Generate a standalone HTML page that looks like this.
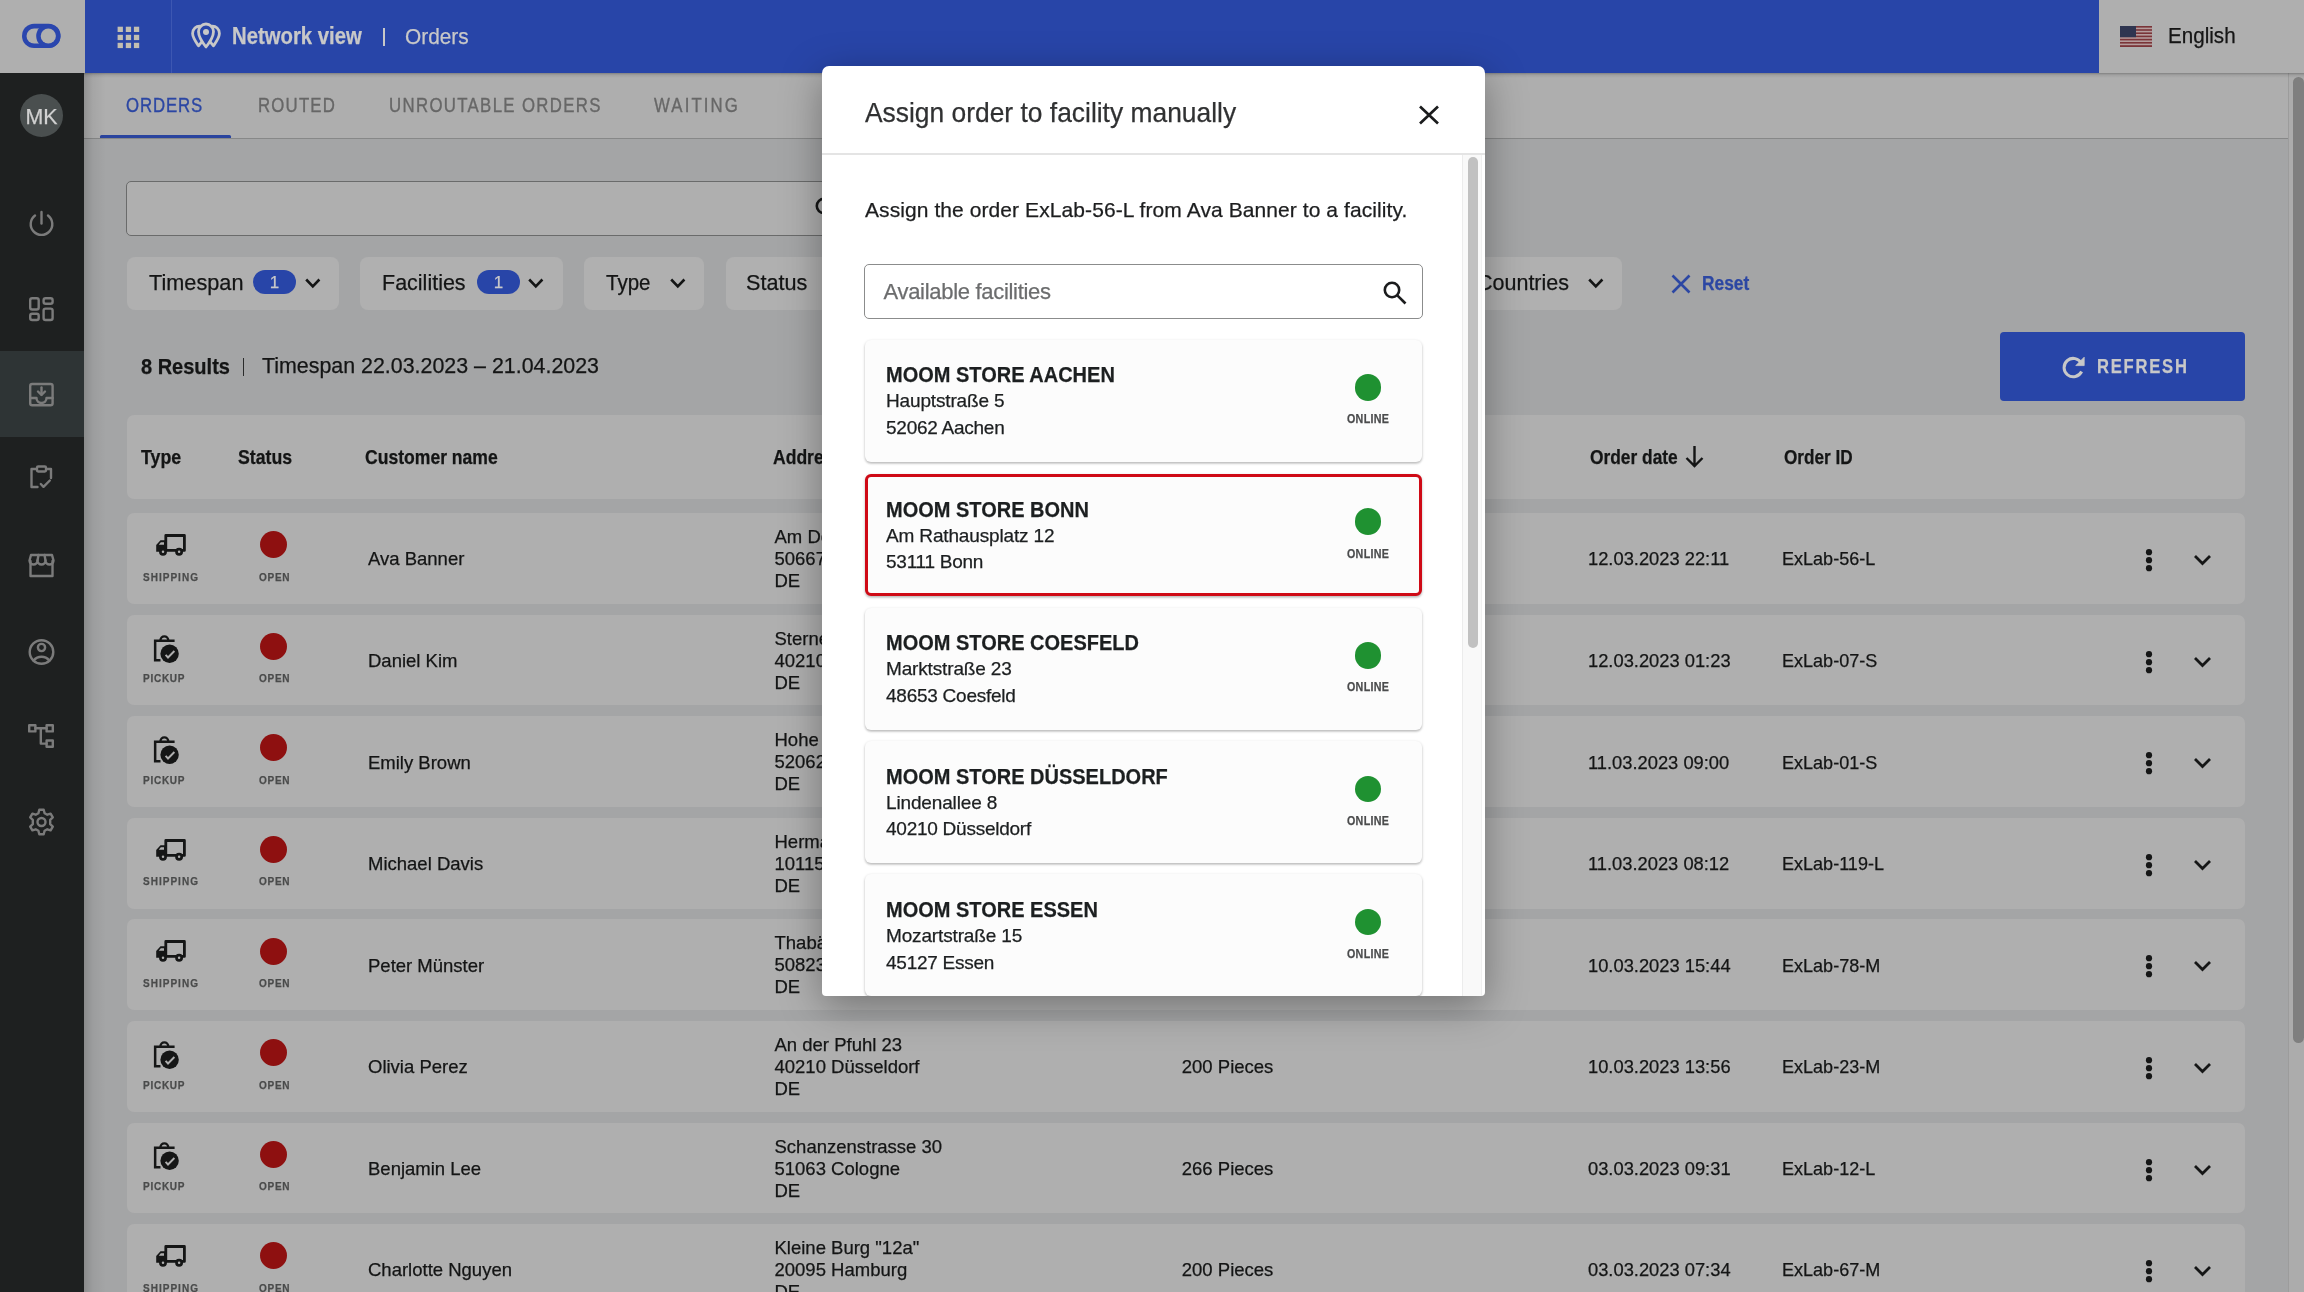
<!DOCTYPE html>
<html><head><meta charset="utf-8">
<style>
*{box-sizing:border-box;margin:0;padding:0}
html,body{width:2304px;height:1292px;overflow:hidden}
body{position:relative;background:#a4a5a6;font-family:"Liberation Sans",sans-serif;color:#121313}
#root{position:absolute;left:0;top:0;width:2304px;height:1292px;overflow:hidden;background:#a4a5a6;will-change:transform}
.a{position:absolute}
.t{position:absolute;white-space:nowrap;line-height:1;-webkit-text-stroke:0.25px currentColor}
svg{position:absolute;overflow:visible}
/* header */
#logo{left:0;top:0;width:85px;height:73px;background:#afafaf}
#hdr{left:85px;top:0;width:2014px;height:73px;background:#2845a8}
#lang{left:2099px;top:0;width:2205px;height:73px;background:#afafaf}
#side{left:0;top:73px;width:84px;height:1219px;background:#1e2020}
#tabs{left:84px;top:73px;width:2204px;height:65.5px;background:#aeaeae;border-bottom:1.5px solid #878888}
.card{position:absolute;background:#afafaf;border-radius:7px}
.chip{position:absolute;background:#b0b0b0;border-radius:8px;top:257px;height:53px}
.badge{position:absolute;background:#2845a8;border-radius:12px;width:43px;height:24px;top:270px;color:#c9c9c9;font-size:17px;text-align:center;line-height:24px}
.lbl{position:absolute;white-space:nowrap;line-height:1;font-size:11.5px;font-weight:700;letter-spacing:0px;color:#4a4b4b}
.dot{position:absolute;width:27px;height:27px;border-radius:50%;background:#8e1010}
.row .t{font-size:19px}
/* modal */
#modal{left:822px;top:65.5px;width:663px;height:930px;background:#fff;border-radius:7px 7px 4px 4px;box-shadow:0 10px 40px rgba(0,0,0,.35);overflow:hidden}
.fcard{position:absolute;left:43px;width:557px;height:122px;background:#fcfcfc;border-radius:6px;box-shadow:0 1px 3px rgba(0,0,0,.22),0 2px 2px rgba(0,0,0,.1)}
.fcard .nm{position:absolute;left:21px;top:27px;font-size:21px;font-weight:700;color:#1d2021;white-space:nowrap;line-height:1}
.fcard .l1{position:absolute;left:21px;top:53px;font-size:19px;color:#1d2021;white-space:nowrap;line-height:1}
.fcard .l2{position:absolute;left:21px;top:80px;font-size:19px;color:#1d2021;white-space:nowrap;line-height:1}
.fcard .gd{position:absolute;left:489px;top:34px;width:27px;height:27px;border-radius:50%;background:#1f9030}
.fcard .on{position:absolute;left:482px;top:74px;font-size:11.5px;font-weight:700;letter-spacing:1.4px;color:#4a4b4b;white-space:nowrap;line-height:1}
</style></head><body><div id="root">

<div id="logo" class="a"></div>
<div id="hdr" class="a"></div>
<div id="lang" class="a"></div>
<div id="side" class="a"></div>
<div id="tabs" class="a"></div>

<!-- logo -->
<svg style="left:0;top:0" width="85" height="73">
<path fill="#2a46ae" d="M34.1 23.8 H48.5 A12.1 12.1 0 0 1 48.5 48 H34.1 A12.1 12.1 0 0 1 34.1 23.8 Z"/>
<path fill="#afafaf" d="M34.1 28.4 H48.5 A7.6 7.6 0 0 1 48.5 43.6 H34.1 A7.6 7.6 0 0 1 34.1 28.4 Z"/>
<circle fill="#2a46ae" cx="48.3" cy="36" r="12.1"/>
<circle fill="#afafaf" cx="48.3" cy="36" r="7.6"/>
</svg>
<!-- grid icon -->
<svg style="left:0;top:0" width="180" height="73" fill="#c2beb1">
<rect x="117.6" y="26.7" width="5.3" height="5.3"/><rect x="125.8" y="26.7" width="5.3" height="5.3"/><rect x="133.9" y="26.7" width="5.3" height="5.3"/>
<rect x="117.6" y="34.8" width="5.3" height="5.3"/><rect x="125.8" y="34.8" width="5.3" height="5.3"/><rect x="133.9" y="34.8" width="5.3" height="5.3"/>
<rect x="117.6" y="42.8" width="5.3" height="5.3"/><rect x="125.8" y="42.8" width="5.3" height="5.3"/><rect x="133.9" y="42.8" width="5.3" height="5.3"/>
</svg>
<div class="a" style="left:171px;top:0;width:1px;height:73px;background:#3d57b2"></div>
<!-- pin icon -->
<svg style="left:0;top:0" width="240" height="73" fill="none" stroke="#c8c8c8" stroke-width="2.8" stroke-linejoin="round" stroke-linecap="round">
<path d="M206 47 C202 42 198.5 37 198.5 31.5 A7.5 7.5 0 0 1 213.5 31.5 C213.5 37 210 42 206 47 Z"/>
<path d="M200.5 26.3 C196 25.8 192.6 29 192.6 33.5 C192.6 37.5 195.5 41.5 198.5 45.8 L201.8 41.8"/>
<path d="M211.5 26.3 C216 25.8 219.4 29 219.4 33.5 C219.4 37.5 216.5 41.5 213.5 45.8 L210.2 41.8"/>
<circle cx="206" cy="31.9" r="3" fill="#c8c8c8" stroke="none"/>
</svg>
<div class="t" style="left:232px;top:25.13px;font-size:23px;font-weight:700;color:#c8c8c8;transform:scaleX(0.883);transform-origin:0 0">Network view</div>
<div class="a" style="left:383px;top:28px;width:1.6px;height:18px;background:#c8c8c8"></div>
<div class="t" style="left:404.5px;top:25.55px;font-size:22.5px;color:#c8c8c8;transform:scaleX(0.926);transform-origin:0 0">Orders</div>
<!-- language -->
<svg style="left:2120px;top:26px" width="32" height="21" viewBox="0 0 32 21">
<rect width="32" height="21" fill="#b49c9c"/>
<g fill="#7a3438"><rect y="0" width="32" height="1.6"/><rect y="3.2" width="32" height="1.6"/><rect y="6.4" width="32" height="1.6"/><rect y="9.6" width="32" height="1.6"/><rect y="12.8" width="32" height="1.6"/><rect y="16" width="32" height="1.6"/><rect y="19.2" width="32" height="1.8"/></g>
<rect width="16" height="11.2" fill="#2f3550"/>
</svg>
<div class="t" style="left:2168px;top:26.1px;font-size:21.5px;color:#151515;transform:scaleX(0.959);transform-origin:0 0">English</div>

<!-- CONTENT -->
<div class="t" style="left:126.3px;top:96.09px;font-size:19.5px;color:#2c47a3;letter-spacing:1.04px;transform:scaleX(0.860);transform-origin:0 0;-webkit-text-stroke:0.35px #2c47a3">ORDERS</div>
<div class="t" style="left:257.8px;top:96.09px;font-size:19.5px;color:#676767;letter-spacing:1.41px;transform:scaleX(0.860);transform-origin:0 0;-webkit-text-stroke:0.35px #676767">ROUTED</div>
<div class="t" style="left:388.9px;top:96.09px;font-size:19.5px;color:#676767;letter-spacing:1.57px;transform:scaleX(0.860);transform-origin:0 0;-webkit-text-stroke:0.35px #676767">UNROUTABLE ORDERS</div>
<div class="t" style="left:654.1px;top:96.09px;font-size:19.5px;color:#676767;letter-spacing:2.48px;transform:scaleX(0.860);transform-origin:0 0;-webkit-text-stroke:0.35px #676767">WAITING</div>
<div class="a" style="left:99.6px;top:134.7px;width:131px;height:3px;background:#2a449e;border-radius:1.5px 1.5px 0 0"></div>
<div class="a" style="left:125.5px;top:181px;width:740px;height:55px;border:1.7px solid #6a6b6b;border-radius:5px;background:#afafaf"></div>
<svg style="left:814.6px;top:197.4px" width="24" height="24" fill="none" stroke="#151616" stroke-width="2.6"><circle cx="9" cy="9" r="7.2"/><path d="M14.3 14.3 L22.5 22.5"/></svg>
<div class="chip" style="left:126.8px;width:212.0px"></div>
<div class="t" style="left:149.3px;top:272.24px;font-size:22.4px;color:#141515;transform:scaleX(0.969);transform-origin:0 0;">Timespan</div>
<div class="badge" style="left:253px"></div>
<div class="t" style="left:253px;top:273.91px;width:43px;text-align:center;font-size:17px;color:#c9c9c9">1</div>
<svg style="left:305px;top:278px" width="16" height="11" fill="none" stroke="#141515" stroke-width="2.6"><path d="M1.2 1.5 L7.8 8.3 L14.4 1.5"/></svg>
<div class="chip" style="left:360.4px;width:202.4px"></div>
<div class="t" style="left:381.6px;top:272.24px;font-size:22.4px;color:#141515;transform:scaleX(0.960);transform-origin:0 0;">Facilities</div>
<div class="badge" style="left:476.9px"></div>
<div class="t" style="left:476.9px;top:273.91px;width:43px;text-align:center;font-size:17px;color:#c9c9c9">1</div>
<svg style="left:528.3px;top:278px" width="16" height="11" fill="none" stroke="#141515" stroke-width="2.6"><path d="M1.2 1.5 L7.8 8.3 L14.4 1.5"/></svg>
<div class="chip" style="left:584.4px;width:119.6px"></div>
<div class="t" style="left:606.0px;top:272.24px;font-size:22.4px;color:#141515;transform:scaleX(0.915);transform-origin:0 0;">Type</div>
<svg style="left:670px;top:278px" width="16" height="11" fill="none" stroke="#141515" stroke-width="2.6"><path d="M1.2 1.5 L7.8 8.3 L14.4 1.5"/></svg>
<div class="chip" style="left:725.5px;width:104.5px"></div>
<div class="t" style="left:746.0px;top:272.24px;font-size:22.4px;color:#141515;transform:scaleX(0.966);transform-origin:0 0;">Status</div>
<div class="chip" style="left:1400px;width:222px"></div>
<div class="t" style="left:1476.5px;top:272.24px;font-size:22.4px;color:#141515;transform:scaleX(0.960);transform-origin:0 0;">Countries</div>
<svg style="left:1588px;top:278px" width="16" height="11" fill="none" stroke="#141515" stroke-width="2.6"><path d="M1.2 1.5 L7.8 8.3 L14.4 1.5"/></svg>
<svg style="left:1671px;top:274px" width="20" height="20" fill="none" stroke="#2c47a3" stroke-width="2.6"><path d="M1.5 1.5 L18.5 18.5 M18.5 1.5 L1.5 18.5"/></svg>
<div class="t" style="left:1701.5px;top:274.49px;font-size:19.5px;font-weight:700;color:#2c47a3;transform:scaleX(0.890);transform-origin:0 0;">Reset</div>
<div class="t" style="left:141.0px;top:356.45px;font-size:21.2px;font-weight:700;color:#141515;transform:scaleX(0.944);transform-origin:0 0;">8 Results</div>
<div class="a" style="left:242.8px;top:357.5px;width:1.6px;height:18px;background:#2a2b2b"></div>
<div class="t" style="left:262.0px;top:356.28px;font-size:21.4px;color:#141515;">Timespan 22.03.2023 – 21.04.2023</div>
<div class="a" style="left:2000px;top:331.5px;width:245px;height:69px;background:#2845a8;border-radius:4px"></div>
<svg style="left:2060px;top:353px" width="28" height="28" fill="none" stroke="#c8c8c8" stroke-width="3"><path d="M21.5 10.5 A9.2 9.2 0 1 0 21.6 18.5"/><path d="M24.2 4.2 V12.6 H15.8 Z" fill="#c8c8c8" stroke-width="0.8"/></svg>
<div class="t" style="left:2096.5px;top:356.69px;font-size:19.5px;font-weight:700;color:#c8c8c8;letter-spacing:2.09px;transform:scaleX(0.850);transform-origin:0 0;">REFRESH</div>
<div class="card" style="left:127px;top:414.7px;width:2118px;height:84.8px"></div>
<div class="t" style="left:140.6px;top:448.46px;font-size:19.3px;font-weight:700;color:#141515;transform:scaleX(0.922);transform-origin:0 0;">Type</div>
<div class="t" style="left:238.3px;top:448.46px;font-size:19.3px;font-weight:700;color:#141515;transform:scaleX(0.918);transform-origin:0 0;">Status</div>
<div class="t" style="left:365.2px;top:448.46px;font-size:19.3px;font-weight:700;color:#141515;transform:scaleX(0.911);transform-origin:0 0;">Customer name</div>
<div class="t" style="left:773.0px;top:448.46px;font-size:19.3px;font-weight:700;color:#141515;transform:scaleX(0.910);transform-origin:0 0;">Address</div>
<div class="t" style="left:1181.0px;top:448.46px;font-size:19.3px;font-weight:700;color:#141515;transform:scaleX(0.910);transform-origin:0 0;">Quantity</div>
<div class="t" style="left:1589.7px;top:448.46px;font-size:19.3px;font-weight:700;color:#141515;transform:scaleX(0.900);transform-origin:0 0;">Order date</div>
<div class="t" style="left:1783.7px;top:448.46px;font-size:19.3px;font-weight:700;color:#141515;transform:scaleX(0.891);transform-origin:0 0;">Order ID</div>
<svg style="left:1684px;top:445px" width="22" height="24" fill="none" stroke="#141515" stroke-width="2.4"><path d="M10.5 1 V21 M2.5 13 L10.5 21 L18.5 13"/></svg>
<div class="card" style="left:127px;top:513.2px;width:2118px;height:90.7px"></div>
<svg style="left:156px;top:533.0px" width="32" height="28"><path d="M9.8 2.5 H28.4 V17.4 H9.8 Z" fill="none" stroke="#151616" stroke-width="2.8" stroke-linejoin="round"/><path d="M0.2 12 L4.5 7.2 H11 V18.8 H0.2 Z" fill="#151616"/><path d="M2.8 11.7 L4.8 9.2 H8 V11.7 Z" fill="#afafaf"/><circle cx="7" cy="18.8" r="2.6" fill="#afafaf" stroke="#151616" stroke-width="2.7"/><circle cx="23.1" cy="18.8" r="2.6" fill="#afafaf" stroke="#151616" stroke-width="2.7"/></svg>
<div class="t" style="left:143.0px;top:571.81px;font-size:11.8px;font-weight:700;color:#4a4b4b;letter-spacing:1.18px;transform:scaleX(0.850);transform-origin:0 0;">SHIPPING</div>
<div class="dot" style="left:260.3px;top:531.3px"></div>
<div class="t" style="left:258.5px;top:571.81px;font-size:11.8px;font-weight:700;color:#4a4b4b;letter-spacing:0.84px;transform:scaleX(0.850);transform-origin:0 0;">OPEN</div>
<div class="t" style="left:368.0px;top:550.44px;font-size:18.5px;color:#141515;">Ava Banner</div>
<div class="t" style="left:774.5px;top:528.24px;font-size:18.5px;color:#141515;">Am Dorfplatz 4</div>
<div class="t" style="left:774.5px;top:550.24px;font-size:18.5px;color:#141515;">50667 Cologne</div>
<div class="t" style="left:774.5px;top:572.24px;font-size:18.5px;color:#141515;">DE</div>
<div class="t" style="left:1588.0px;top:550.44px;font-size:18.5px;color:#141515;transform:scaleX(0.990);transform-origin:0 0;">12.03.2023 22:11</div>
<div class="t" style="left:1782.0px;top:550.44px;font-size:18.5px;color:#141515;transform:scaleX(0.975);transform-origin:0 0;">ExLab-56-L</div>
<svg style="left:2140px;top:549.2px" width="18" height="26" fill="#151616"><circle cx="9" cy="3.2" r="3.1"/><circle cx="9" cy="11.2" r="3.1"/><circle cx="9" cy="19.2" r="3.1"/></svg>
<svg style="left:2193px;top:554.2px" width="20" height="14" fill="none" stroke="#151616" stroke-width="2.8"><path d="M2 2 L9.5 9.5 L17 2"/></svg>
<div class="card" style="left:127px;top:614.8px;width:2118px;height:90.7px"></div>
<svg style="left:150px;top:629.5px" width="32" height="34"><path d="M10.45 12 V10.3 A3.9 3.9 0 0 1 18.25 10.3 V12" fill="none" stroke="#151616" stroke-width="2.4"/><path d="M10.5 30.3 H5.15 V10.7 H24.6" fill="none" stroke="#151616" stroke-width="2.5"/><circle cx="19.6" cy="23.8" r="10.4" fill="#afafaf"/><circle cx="19.6" cy="23.8" r="9.2" fill="#151616"/><path d="M15.6 24.9 L18 27.5 L24.4 21" fill="none" stroke="#afafaf" stroke-width="1.9"/></svg>
<div class="t" style="left:143.2px;top:673.36px;font-size:11.8px;font-weight:700;color:#4a4b4b;letter-spacing:0.85px;transform:scaleX(0.850);transform-origin:0 0;">PICKUP</div>
<div class="dot" style="left:260.3px;top:632.9px"></div>
<div class="t" style="left:258.5px;top:673.36px;font-size:11.8px;font-weight:700;color:#4a4b4b;letter-spacing:0.84px;transform:scaleX(0.850);transform-origin:0 0;">OPEN</div>
<div class="t" style="left:368.0px;top:651.99px;font-size:18.5px;color:#141515;">Daniel Kim</div>
<div class="t" style="left:774.5px;top:629.79px;font-size:18.5px;color:#141515;">Sternenweg 12</div>
<div class="t" style="left:774.5px;top:651.79px;font-size:18.5px;color:#141515;">40210 Düsseldorf</div>
<div class="t" style="left:774.5px;top:673.79px;font-size:18.5px;color:#141515;">DE</div>
<div class="t" style="left:1588.0px;top:651.99px;font-size:18.5px;color:#141515;transform:scaleX(0.990);transform-origin:0 0;">12.03.2023 01:23</div>
<div class="t" style="left:1782.0px;top:651.99px;font-size:18.5px;color:#141515;transform:scaleX(0.975);transform-origin:0 0;">ExLab-07-S</div>
<svg style="left:2140px;top:650.8px" width="18" height="26" fill="#151616"><circle cx="9" cy="3.2" r="3.1"/><circle cx="9" cy="11.2" r="3.1"/><circle cx="9" cy="19.2" r="3.1"/></svg>
<svg style="left:2193px;top:655.8px" width="20" height="14" fill="none" stroke="#151616" stroke-width="2.8"><path d="M2 2 L9.5 9.5 L17 2"/></svg>
<div class="card" style="left:127px;top:716.3px;width:2118px;height:90.7px"></div>
<svg style="left:150px;top:731.1px" width="32" height="34"><path d="M10.45 12 V10.3 A3.9 3.9 0 0 1 18.25 10.3 V12" fill="none" stroke="#151616" stroke-width="2.4"/><path d="M10.5 30.3 H5.15 V10.7 H24.6" fill="none" stroke="#151616" stroke-width="2.5"/><circle cx="19.6" cy="23.8" r="10.4" fill="#afafaf"/><circle cx="19.6" cy="23.8" r="9.2" fill="#151616"/><path d="M15.6 24.9 L18 27.5 L24.4 21" fill="none" stroke="#afafaf" stroke-width="1.9"/></svg>
<div class="t" style="left:143.2px;top:774.91px;font-size:11.8px;font-weight:700;color:#4a4b4b;letter-spacing:0.85px;transform:scaleX(0.850);transform-origin:0 0;">PICKUP</div>
<div class="dot" style="left:260.3px;top:734.4px"></div>
<div class="t" style="left:258.5px;top:774.91px;font-size:11.8px;font-weight:700;color:#4a4b4b;letter-spacing:0.84px;transform:scaleX(0.850);transform-origin:0 0;">OPEN</div>
<div class="t" style="left:368.0px;top:753.54px;font-size:18.5px;color:#141515;">Emily Brown</div>
<div class="t" style="left:774.5px;top:731.34px;font-size:18.5px;color:#141515;">Hohe Straße 8</div>
<div class="t" style="left:774.5px;top:753.34px;font-size:18.5px;color:#141515;">52062 Aachen</div>
<div class="t" style="left:774.5px;top:775.34px;font-size:18.5px;color:#141515;">DE</div>
<div class="t" style="left:1588.0px;top:753.54px;font-size:18.5px;color:#141515;transform:scaleX(0.990);transform-origin:0 0;">11.03.2023 09:00</div>
<div class="t" style="left:1782.0px;top:753.54px;font-size:18.5px;color:#141515;transform:scaleX(0.975);transform-origin:0 0;">ExLab-01-S</div>
<svg style="left:2140px;top:752.3px" width="18" height="26" fill="#151616"><circle cx="9" cy="3.2" r="3.1"/><circle cx="9" cy="11.2" r="3.1"/><circle cx="9" cy="19.2" r="3.1"/></svg>
<svg style="left:2193px;top:757.3px" width="20" height="14" fill="none" stroke="#151616" stroke-width="2.8"><path d="M2 2 L9.5 9.5 L17 2"/></svg>
<div class="card" style="left:127px;top:817.9px;width:2118px;height:90.7px"></div>
<svg style="left:156px;top:837.6px" width="32" height="28"><path d="M9.8 2.5 H28.4 V17.4 H9.8 Z" fill="none" stroke="#151616" stroke-width="2.8" stroke-linejoin="round"/><path d="M0.2 12 L4.5 7.2 H11 V18.8 H0.2 Z" fill="#151616"/><path d="M2.8 11.7 L4.8 9.2 H8 V11.7 Z" fill="#afafaf"/><circle cx="7" cy="18.8" r="2.6" fill="#afafaf" stroke="#151616" stroke-width="2.7"/><circle cx="23.1" cy="18.8" r="2.6" fill="#afafaf" stroke="#151616" stroke-width="2.7"/></svg>
<div class="t" style="left:143.0px;top:876.46px;font-size:11.8px;font-weight:700;color:#4a4b4b;letter-spacing:1.18px;transform:scaleX(0.850);transform-origin:0 0;">SHIPPING</div>
<div class="dot" style="left:260.3px;top:836.0px"></div>
<div class="t" style="left:258.5px;top:876.46px;font-size:11.8px;font-weight:700;color:#4a4b4b;letter-spacing:0.84px;transform:scaleX(0.850);transform-origin:0 0;">OPEN</div>
<div class="t" style="left:368.0px;top:855.09px;font-size:18.5px;color:#141515;">Michael Davis</div>
<div class="t" style="left:774.5px;top:832.89px;font-size:18.5px;color:#141515;">Hermannstraße 5</div>
<div class="t" style="left:774.5px;top:854.89px;font-size:18.5px;color:#141515;">10115 Berlin</div>
<div class="t" style="left:774.5px;top:876.89px;font-size:18.5px;color:#141515;">DE</div>
<div class="t" style="left:1588.0px;top:855.09px;font-size:18.5px;color:#141515;transform:scaleX(0.990);transform-origin:0 0;">11.03.2023 08:12</div>
<div class="t" style="left:1782.0px;top:855.09px;font-size:18.5px;color:#141515;transform:scaleX(0.975);transform-origin:0 0;">ExLab-119-L</div>
<svg style="left:2140px;top:853.9px" width="18" height="26" fill="#151616"><circle cx="9" cy="3.2" r="3.1"/><circle cx="9" cy="11.2" r="3.1"/><circle cx="9" cy="19.2" r="3.1"/></svg>
<svg style="left:2193px;top:858.9px" width="20" height="14" fill="none" stroke="#151616" stroke-width="2.8"><path d="M2 2 L9.5 9.5 L17 2"/></svg>
<div class="card" style="left:127px;top:919.4px;width:2118px;height:90.7px"></div>
<svg style="left:156px;top:939.2px" width="32" height="28"><path d="M9.8 2.5 H28.4 V17.4 H9.8 Z" fill="none" stroke="#151616" stroke-width="2.8" stroke-linejoin="round"/><path d="M0.2 12 L4.5 7.2 H11 V18.8 H0.2 Z" fill="#151616"/><path d="M2.8 11.7 L4.8 9.2 H8 V11.7 Z" fill="#afafaf"/><circle cx="7" cy="18.8" r="2.6" fill="#afafaf" stroke="#151616" stroke-width="2.7"/><circle cx="23.1" cy="18.8" r="2.6" fill="#afafaf" stroke="#151616" stroke-width="2.7"/></svg>
<div class="t" style="left:143.0px;top:978.01px;font-size:11.8px;font-weight:700;color:#4a4b4b;letter-spacing:1.18px;transform:scaleX(0.850);transform-origin:0 0;">SHIPPING</div>
<div class="dot" style="left:260.3px;top:937.5px"></div>
<div class="t" style="left:258.5px;top:978.01px;font-size:11.8px;font-weight:700;color:#4a4b4b;letter-spacing:0.84px;transform:scaleX(0.850);transform-origin:0 0;">OPEN</div>
<div class="t" style="left:368.0px;top:956.64px;font-size:18.5px;color:#141515;">Peter Münster</div>
<div class="t" style="left:774.5px;top:934.44px;font-size:18.5px;color:#141515;">Thabäerstraße 2</div>
<div class="t" style="left:774.5px;top:956.44px;font-size:18.5px;color:#141515;">50823 Cologne</div>
<div class="t" style="left:774.5px;top:978.44px;font-size:18.5px;color:#141515;">DE</div>
<div class="t" style="left:1588.0px;top:956.64px;font-size:18.5px;color:#141515;transform:scaleX(0.990);transform-origin:0 0;">10.03.2023 15:44</div>
<div class="t" style="left:1782.0px;top:956.64px;font-size:18.5px;color:#141515;transform:scaleX(0.975);transform-origin:0 0;">ExLab-78-M</div>
<svg style="left:2140px;top:955.4px" width="18" height="26" fill="#151616"><circle cx="9" cy="3.2" r="3.1"/><circle cx="9" cy="11.2" r="3.1"/><circle cx="9" cy="19.2" r="3.1"/></svg>
<svg style="left:2193px;top:960.4px" width="20" height="14" fill="none" stroke="#151616" stroke-width="2.8"><path d="M2 2 L9.5 9.5 L17 2"/></svg>
<div class="card" style="left:127px;top:1021.0px;width:2118px;height:90.7px"></div>
<svg style="left:150px;top:1035.8px" width="32" height="34"><path d="M10.45 12 V10.3 A3.9 3.9 0 0 1 18.25 10.3 V12" fill="none" stroke="#151616" stroke-width="2.4"/><path d="M10.5 30.3 H5.15 V10.7 H24.6" fill="none" stroke="#151616" stroke-width="2.5"/><circle cx="19.6" cy="23.8" r="10.4" fill="#afafaf"/><circle cx="19.6" cy="23.8" r="9.2" fill="#151616"/><path d="M15.6 24.9 L18 27.5 L24.4 21" fill="none" stroke="#afafaf" stroke-width="1.9"/></svg>
<div class="t" style="left:143.2px;top:1079.56px;font-size:11.8px;font-weight:700;color:#4a4b4b;letter-spacing:0.85px;transform:scaleX(0.850);transform-origin:0 0;">PICKUP</div>
<div class="dot" style="left:260.3px;top:1039.0px"></div>
<div class="t" style="left:258.5px;top:1079.56px;font-size:11.8px;font-weight:700;color:#4a4b4b;letter-spacing:0.84px;transform:scaleX(0.850);transform-origin:0 0;">OPEN</div>
<div class="t" style="left:368.0px;top:1058.19px;font-size:18.5px;color:#141515;">Olivia Perez</div>
<div class="t" style="left:774.5px;top:1035.99px;font-size:18.5px;color:#141515;">An der Pfuhl 23</div>
<div class="t" style="left:774.5px;top:1057.99px;font-size:18.5px;color:#141515;">40210 Düsseldorf</div>
<div class="t" style="left:774.5px;top:1079.99px;font-size:18.5px;color:#141515;">DE</div>
<div class="t" style="left:1181.8px;top:1058.19px;font-size:18.5px;color:#141515;">200 Pieces</div>
<div class="t" style="left:1588.0px;top:1058.19px;font-size:18.5px;color:#141515;transform:scaleX(0.990);transform-origin:0 0;">10.03.2023 13:56</div>
<div class="t" style="left:1782.0px;top:1058.19px;font-size:18.5px;color:#141515;transform:scaleX(0.975);transform-origin:0 0;">ExLab-23-M</div>
<svg style="left:2140px;top:1057.0px" width="18" height="26" fill="#151616"><circle cx="9" cy="3.2" r="3.1"/><circle cx="9" cy="11.2" r="3.1"/><circle cx="9" cy="19.2" r="3.1"/></svg>
<svg style="left:2193px;top:1062.0px" width="20" height="14" fill="none" stroke="#151616" stroke-width="2.8"><path d="M2 2 L9.5 9.5 L17 2"/></svg>
<div class="card" style="left:127px;top:1122.5px;width:2118px;height:90.7px"></div>
<svg style="left:150px;top:1137.3px" width="32" height="34"><path d="M10.45 12 V10.3 A3.9 3.9 0 0 1 18.25 10.3 V12" fill="none" stroke="#151616" stroke-width="2.4"/><path d="M10.5 30.3 H5.15 V10.7 H24.6" fill="none" stroke="#151616" stroke-width="2.5"/><circle cx="19.6" cy="23.8" r="10.4" fill="#afafaf"/><circle cx="19.6" cy="23.8" r="9.2" fill="#151616"/><path d="M15.6 24.9 L18 27.5 L24.4 21" fill="none" stroke="#afafaf" stroke-width="1.9"/></svg>
<div class="t" style="left:143.2px;top:1181.11px;font-size:11.8px;font-weight:700;color:#4a4b4b;letter-spacing:0.85px;transform:scaleX(0.850);transform-origin:0 0;">PICKUP</div>
<div class="dot" style="left:260.3px;top:1140.6px"></div>
<div class="t" style="left:258.5px;top:1181.11px;font-size:11.8px;font-weight:700;color:#4a4b4b;letter-spacing:0.84px;transform:scaleX(0.850);transform-origin:0 0;">OPEN</div>
<div class="t" style="left:368.0px;top:1159.74px;font-size:18.5px;color:#141515;">Benjamin Lee</div>
<div class="t" style="left:774.5px;top:1137.54px;font-size:18.5px;color:#141515;">Schanzenstrasse 30</div>
<div class="t" style="left:774.5px;top:1159.54px;font-size:18.5px;color:#141515;">51063 Cologne</div>
<div class="t" style="left:774.5px;top:1181.54px;font-size:18.5px;color:#141515;">DE</div>
<div class="t" style="left:1181.8px;top:1159.74px;font-size:18.5px;color:#141515;">266 Pieces</div>
<div class="t" style="left:1588.0px;top:1159.74px;font-size:18.5px;color:#141515;transform:scaleX(0.990);transform-origin:0 0;">03.03.2023 09:31</div>
<div class="t" style="left:1782.0px;top:1159.74px;font-size:18.5px;color:#141515;transform:scaleX(0.975);transform-origin:0 0;">ExLab-12-L</div>
<svg style="left:2140px;top:1158.5px" width="18" height="26" fill="#151616"><circle cx="9" cy="3.2" r="3.1"/><circle cx="9" cy="11.2" r="3.1"/><circle cx="9" cy="19.2" r="3.1"/></svg>
<svg style="left:2193px;top:1163.5px" width="20" height="14" fill="none" stroke="#151616" stroke-width="2.8"><path d="M2 2 L9.5 9.5 L17 2"/></svg>
<div class="card" style="left:127px;top:1224.1px;width:2118px;height:90.7px"></div>
<svg style="left:156px;top:1243.9px" width="32" height="28"><path d="M9.8 2.5 H28.4 V17.4 H9.8 Z" fill="none" stroke="#151616" stroke-width="2.8" stroke-linejoin="round"/><path d="M0.2 12 L4.5 7.2 H11 V18.8 H0.2 Z" fill="#151616"/><path d="M2.8 11.7 L4.8 9.2 H8 V11.7 Z" fill="#afafaf"/><circle cx="7" cy="18.8" r="2.6" fill="#afafaf" stroke="#151616" stroke-width="2.7"/><circle cx="23.1" cy="18.8" r="2.6" fill="#afafaf" stroke="#151616" stroke-width="2.7"/></svg>
<div class="t" style="left:143.0px;top:1282.66px;font-size:11.8px;font-weight:700;color:#4a4b4b;letter-spacing:1.18px;transform:scaleX(0.850);transform-origin:0 0;">SHIPPING</div>
<div class="dot" style="left:260.3px;top:1242.2px"></div>
<div class="t" style="left:258.5px;top:1282.66px;font-size:11.8px;font-weight:700;color:#4a4b4b;letter-spacing:0.84px;transform:scaleX(0.850);transform-origin:0 0;">OPEN</div>
<div class="t" style="left:368.0px;top:1261.29px;font-size:18.5px;color:#141515;">Charlotte Nguyen</div>
<div class="t" style="left:774.5px;top:1239.09px;font-size:18.5px;color:#141515;">Kleine Burg "12a"</div>
<div class="t" style="left:774.5px;top:1261.09px;font-size:18.5px;color:#141515;">20095 Hamburg</div>
<div class="t" style="left:774.5px;top:1283.09px;font-size:18.5px;color:#141515;">DE</div>
<div class="t" style="left:1181.8px;top:1261.29px;font-size:18.5px;color:#141515;">200 Pieces</div>
<div class="t" style="left:1588.0px;top:1261.29px;font-size:18.5px;color:#141515;transform:scaleX(0.990);transform-origin:0 0;">03.03.2023 07:34</div>
<div class="t" style="left:1782.0px;top:1261.29px;font-size:18.5px;color:#141515;transform:scaleX(0.975);transform-origin:0 0;">ExLab-67-M</div>
<svg style="left:2140px;top:1260.1px" width="18" height="26" fill="#151616"><circle cx="9" cy="3.2" r="3.1"/><circle cx="9" cy="11.2" r="3.1"/><circle cx="9" cy="19.2" r="3.1"/></svg>
<svg style="left:2193px;top:1265.1px" width="20" height="14" fill="none" stroke="#151616" stroke-width="2.8"><path d="M2 2 L9.5 9.5 L17 2"/></svg>
<div class="a" style="left:2288px;top:73px;width:16px;height:1219px;background:#acacac;border-left:1px solid #9c9c9c"></div>
<div class="a" style="left:2293px;top:77px;width:11px;height:966px;background:#7f7f7f;border-radius:5.5px"></div>
<!-- /CONTENT -->
<!-- sidebar -->
<div class="a" style="left:0;top:351px;width:84px;height:86px;background:#2e3435"></div>
<div class="a" style="left:20px;top:94px;width:43px;height:43px;border-radius:50%;background:#4a4f4f"></div>
<div class="t" style="left:25.5px;top:106.58px;font-size:21.4px;color:#d0d0d0;transform:scaleX(1.0);transform-origin:0 0">MK</div>
<svg style="left:0;top:0" width="84" height="900" fill="none" stroke="#7b7b7b" stroke-width="2.4" stroke-linecap="round" stroke-linejoin="round">
<!-- power -->
<path d="M41.5 212 V223.5"/>
<path d="M35 215.5 A10.8 10.8 0 1 0 48 215.5"/>
<!-- dashboard -->
<rect x="30.2" y="298.2" width="8.5" height="11.3" rx="2"/>
<rect x="30.2" y="313.8" width="8.5" height="6.2" rx="2"/>
<rect x="43.6" y="298.2" width="9" height="5.6" rx="2"/>
<rect x="43.6" y="308.6" width="9" height="11.4" rx="2"/>
<!-- inbox -->
<rect x="30.2" y="384" width="22.4" height="21.3" rx="2"/>
<path d="M30.2 398 H36.5 A5 5 0 0 0 46.5 398 H52.6"/>
<path d="M41.5 387.5 V394.5" />
<path d="M38 391.5 L41.5 395 L45 391.5"/>
<!-- clipboard -->
<path d="M36.5 469 H31.5 V487 H37.5"/>
<path d="M46.5 469 H51 V478"/>
<rect x="37" y="466.5" width="9" height="5" rx="1.2"/>
<path d="M40.8 484 L43.5 486.8 L49.8 480.5"/>
<!-- store -->
<path d="M30.5 561 V576 H52.5 V561"/>
<path d="M29.5 560.5 L31 555 H52 L53.5 560.5 A4 4 0 0 1 45.5 560.5 A4 4 0 0 1 37.5 560.5 A4 4 0 0 1 29.5 560.5 Z"/>
<path d="M37.5 560.5 L38.5 555 M45.5 560.5 L44.5 555"/>
<!-- person -->
<circle cx="41.5" cy="652" r="11.8"/>
<circle cx="41.5" cy="647.5" r="3.6"/>
<path d="M33.5 660.5 C38 655.5 45 655.5 49.5 660.5"/>
<!-- hierarchy -->
<rect x="29.2" y="725.2" width="6.2" height="6.2"/>
<rect x="46.6" y="725.2" width="6.2" height="6.2"/>
<rect x="46.6" y="740.5" width="6.2" height="6.2"/>
<path d="M35.4 728.3 H46.6 M40.8 728.3 V743.6 H46.6"/>
<!-- gear -->
<circle cx="41.5" cy="822" r="4"/>
<path d="M39.3 809.8 H43.7 L44.6 813.2 L47.3 814.7 L50.6 813.6 L52.8 817.4 L50.2 819.8 V824.2 L52.8 826.6 L50.6 830.4 L47.3 829.3 L44.6 830.8 L43.7 834.2 H39.3 L38.4 830.8 L35.7 829.3 L32.4 830.4 L30.2 826.6 L32.8 824.2 V819.8 L30.2 817.4 L32.4 813.6 L35.7 814.7 L38.4 813.2 Z"/>
</svg>
<!-- sidebar shadow on content -->
<div class="a" style="left:84px;top:73px;width:22px;height:1219px;background:linear-gradient(90deg,rgba(0,0,0,.16),rgba(0,0,0,.05) 40%,rgba(0,0,0,0))"></div>
<!-- header shadow -->
<div class="a" style="left:84px;top:73px;width:2220px;height:5px;background:linear-gradient(rgba(0,0,0,.26),rgba(0,0,0,.08) 40%,rgba(0,0,0,0))"></div>

<!-- MODAL -->
<div id="modal" class="a">
<div class="t" style="left:43.0px;top:32.57px;font-size:28.5px;color:#303132;transform:scaleX(0.926);transform-origin:0 0;">Assign order to facility manually</div>
<svg style="left:597px;top:40.2px" width="20" height="18" fill="none" stroke="#1b1c1d" stroke-width="2.7"><path d="M1 0.5 L19 17.5 M19 0.5 L1 17.5"/></svg>
<div class="a" style="left:0;top:87.0px;width:663px;height:2px;background:#e4e4e4"></div>
<div class="a" style="left:640px;top:89.0px;width:20px;height:900px;background:#f9f9f9;border-left:1px solid #ececec;border-right:1px solid #f0f0f0"></div>
<div class="a" style="left:645.5px;top:91.9px;width:10px;height:491px;background:#c1c1c1;border-radius:5px"></div>
<div class="t" style="left:43.0px;top:133.32px;font-size:21px;color:#1d1e1f;letter-spacing:0.08px;">Assign the order ExLab-56-L from Ava Banner to a facility.</div>
<div class="a" style="left:41.700000000000045px;top:198.2px;width:559px;height:55.2px;border:1.6px solid #8b8c8c;border-radius:5px"></div>
<div class="t" style="left:61.5px;top:215.98px;font-size:22px;color:#6c6d6e;letter-spacing:-0.30px;">Available facilities</div>
<svg style="left:561px;top:215.5px" width="24" height="24" fill="none" stroke="#1b1c1d" stroke-width="2.6"><circle cx="9" cy="9" r="7.2"/><path d="M14.3 14.3 L22.5 22.5"/></svg>
<div class="fcard" style="left:43px;top:274.0px;"></div>
<div class="t" style="left:63.5px;top:299.60px;font-size:21.5px;font-weight:700;color:#1c1f20;transform:scaleX(0.930);transform-origin:0 0;">MOOM STORE AACHEN</div>
<div class="t" style="left:64.0px;top:325.82px;font-size:19px;color:#1c1f20;letter-spacing:-0.15px;">Hauptstraße 5</div>
<div class="t" style="left:64.0px;top:352.42px;font-size:19px;color:#1c1f20;letter-spacing:-0.25px;">52062 Aachen</div>
<div class="a" style="left:532.7px;top:308.5px;width:26.6px;height:26.6px;border-radius:50%;background:#1f9131"></div>
<div class="t" style="left:525.0px;top:347.73px;font-size:12.6px;font-weight:700;color:#4b4c4d;letter-spacing:0.34px;transform:scaleX(0.850);transform-origin:0 0;">ONLINE</div>
<div class="fcard" style="left:43px;top:408.4px;border:3px solid #cf0a16;"></div>
<div class="t" style="left:63.5px;top:434.00px;font-size:21.5px;font-weight:700;color:#1c1f20;transform:scaleX(0.930);transform-origin:0 0;">MOOM STORE BONN</div>
<div class="t" style="left:64.0px;top:460.22px;font-size:19px;color:#1c1f20;letter-spacing:-0.15px;">Am Rathausplatz 12</div>
<div class="t" style="left:64.0px;top:486.82px;font-size:19px;color:#1c1f20;letter-spacing:-0.25px;">53111 Bonn</div>
<div class="a" style="left:532.7px;top:442.9px;width:26.6px;height:26.6px;border-radius:50%;background:#1f9131"></div>
<div class="t" style="left:525.0px;top:482.13px;font-size:12.6px;font-weight:700;color:#4b4c4d;letter-spacing:0.34px;transform:scaleX(0.850);transform-origin:0 0;">ONLINE</div>
<div class="fcard" style="left:43px;top:542.1px;"></div>
<div class="t" style="left:63.5px;top:567.70px;font-size:21.5px;font-weight:700;color:#1c1f20;transform:scaleX(0.930);transform-origin:0 0;">MOOM STORE COESFELD</div>
<div class="t" style="left:64.0px;top:593.92px;font-size:19px;color:#1c1f20;letter-spacing:-0.15px;">Marktstraße 23</div>
<div class="t" style="left:64.0px;top:620.52px;font-size:19px;color:#1c1f20;letter-spacing:-0.25px;">48653 Coesfeld</div>
<div class="a" style="left:532.7px;top:576.6px;width:26.6px;height:26.6px;border-radius:50%;background:#1f9131"></div>
<div class="t" style="left:525.0px;top:615.83px;font-size:12.6px;font-weight:700;color:#4b4c4d;letter-spacing:0.34px;transform:scaleX(0.850);transform-origin:0 0;">ONLINE</div>
<div class="fcard" style="left:43px;top:675.5px;"></div>
<div class="t" style="left:63.5px;top:701.10px;font-size:21.5px;font-weight:700;color:#1c1f20;transform:scaleX(0.930);transform-origin:0 0;">MOOM STORE DÜSSELDORF</div>
<div class="t" style="left:64.0px;top:727.32px;font-size:19px;color:#1c1f20;letter-spacing:-0.15px;">Lindenallee 8</div>
<div class="t" style="left:64.0px;top:753.92px;font-size:19px;color:#1c1f20;letter-spacing:-0.25px;">40210 Düsseldorf</div>
<div class="a" style="left:532.7px;top:710.0px;width:26.6px;height:26.6px;border-radius:50%;background:#1f9131"></div>
<div class="t" style="left:525.0px;top:749.23px;font-size:12.6px;font-weight:700;color:#4b4c4d;letter-spacing:0.34px;transform:scaleX(0.850);transform-origin:0 0;">ONLINE</div>
<div class="fcard" style="left:43px;top:808.9px;"></div>
<div class="t" style="left:63.5px;top:834.50px;font-size:21.5px;font-weight:700;color:#1c1f20;transform:scaleX(0.930);transform-origin:0 0;">MOOM STORE ESSEN</div>
<div class="t" style="left:64.0px;top:860.72px;font-size:19px;color:#1c1f20;letter-spacing:-0.15px;">Mozartstraße 15</div>
<div class="t" style="left:64.0px;top:887.32px;font-size:19px;color:#1c1f20;letter-spacing:-0.25px;">45127 Essen</div>
<div class="a" style="left:532.7px;top:843.4px;width:26.6px;height:26.6px;border-radius:50%;background:#1f9131"></div>
<div class="t" style="left:525.0px;top:882.63px;font-size:12.6px;font-weight:700;color:#4b4c4d;letter-spacing:0.34px;transform:scaleX(0.850);transform-origin:0 0;">ONLINE</div>
</div>
<!-- /MODAL -->
</div></body></html>
